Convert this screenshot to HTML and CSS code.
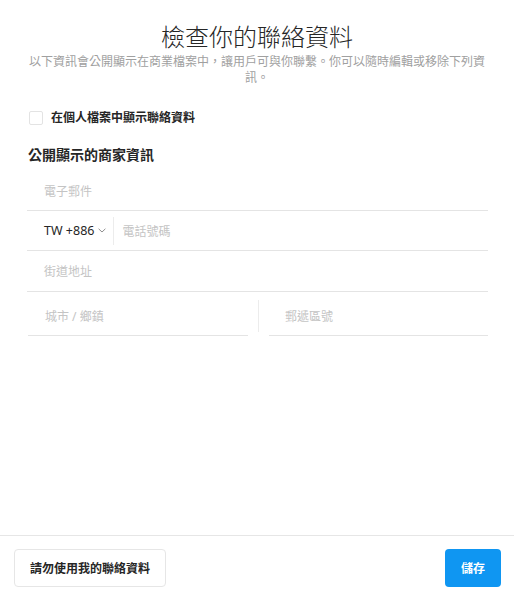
FILE: index.html
```html
<!DOCTYPE html>
<html lang="zh-Hant">
<head>
<meta charset="utf-8">
<title>檢查你的聯絡資料</title>
<link rel="stylesheet" href="styles.css">
</head>
<body>
<div class="page">
  <main class="content">
    <h1 class="title">檢查你的聯絡資料</h1>
    <p class="subtitle">以下資訊會公開顯示在商業檔案中，讓用戶可與你聯繫。你可以隨時編輯或移除下列資訊。</p>
    <label class="check-row">
      <span class="checkbox"></span>
      <span class="check-label">在個人檔案中顯示聯絡資料</span>
    </label>
    <h2 class="section">公開顯示的商家資訊</h2>
    <div class="fields">
      <div class="field"><span class="ph">電子郵件</span></div>
      <div class="field phone">
        <span class="code">TW +886
          <svg class="chev" width="8" height="5" viewBox="0 0 8 5"><path d="M0.6 0.8 L4 4 L7.4 0.8" fill="none" stroke="#8e8e8e" stroke-width="1"/></svg>
        </span>
        <span class="vdiv"></span>
        <span class="ph">電話號碼</span>
      </div>
      <div class="field street"><span class="ph">街道地址</span></div>
      <div class="split">
        <div class="field half"><span class="ph">城市 / 鄉鎮</span></div>
        <span class="vdiv tall"></span>
        <div class="field half zip"><span class="ph">郵遞區號</span></div>
      </div>
    </div>
  </main>
  <footer class="footer">
    <button class="btn secondary">請勿使用我的聯絡資料</button>
    <button class="btn primary">儲存</button>
  </footer>
</div>
</body>
</html>
```
FILE: styles.css
```css
* { box-sizing: border-box; }
html, body { margin: 0; padding: 0; background: #fff; }
body {
  font-family: "Noto Sans", "Noto Sans CJK TC", sans-serif;
  color: #262626;
}
.page {
  width: 514px;
  height: 600px;
  display: flex;
  flex-direction: column;
}
.content {
  flex: 1;
  padding-top: 22px;
}
.title {
  margin: 0;
  font-size: 24px;
  line-height: 30px;
  font-weight: 300;
  text-align: center;
  color: #262626;
}
.subtitle {
  margin: 2px 0 0;
  padding: 0 26px;
  font-size: 12px;
  line-height: 16px;
  color: #a0a0a0;
  text-align: center;
}
.check-row {
  display: flex;
  align-items: center;
  gap: 8px;
  margin: 24px 0 0 29px;
  height: 16px;
}
.checkbox {
  width: 14px;
  height: 14px;
  border: 1px solid #e3e3e3;
  border-radius: 2px;
  background: #fff;
}
.check-label {
  font-size: 12px;
  line-height: 16px;
  font-weight: 700;
  color: #262626;
}
.section {
  margin: 19px 0 0 28px;
  font-size: 14px;
  line-height: 20px;
  font-weight: 700;
  color: #262626;
}
.fields {
  margin-top: 6px;
  padding: 0 26px 0 27px;
}
.field {
  height: 40px;
  display: flex;
  align-items: center;
  padding-left: 17px;
  border-bottom: 1px solid #e4e4e4;
}
.street { height: 41px; }
.ph {
  font-size: 12px;
  color: #c4c4c4;
}
.phone { padding-left: 17px; }
.code {
  display: flex;
  align-items: center;
  gap: 4px;
  font-size: 12.5px;
  color: #262626;
}
.vdiv {
  width: 1px;
  height: 28px;
  background: #ececec;
  margin: 0 8px 0 7px;
}
.split {
  display: flex;
  align-items: center;
  margin-top: 4px;
}
.half { flex: 1; }
.split .field:first-child { margin-left: 1px; }
.vdiv.tall {
  height: 32px;
  margin: 0 10px;
}
.zip { padding-left: 16px; }
.footer {
  border-top: 1px solid #e6e6e6;
  padding: 13px 13px 13px 14px;
  display: flex;
  justify-content: space-between;
  align-items: center;
}
.btn {
  height: 38px;
  border-radius: 4px;
  font-family: "Noto Sans", "Noto Sans CJK TC", sans-serif;
  font-size: 12px;
  font-weight: 700;
  cursor: pointer;
}
.secondary {
  width: 152px;
  background: #fff;
  border: 1px solid #e6e6e6;
  color: #262626;
}
.primary {
  width: 56px;
  background: #0f96f2;
  border: none;
  color: #fff;
}
```
